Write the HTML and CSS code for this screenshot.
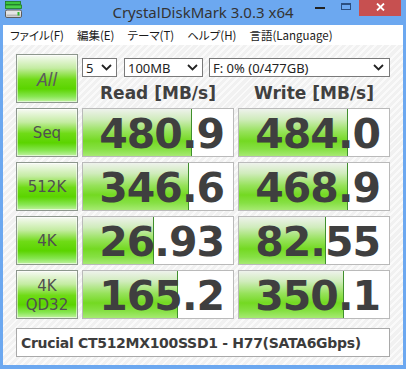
FILE: index.html
```html
<!DOCTYPE html>
<html lang="ja">
<head>
  <meta charset="UTF-8">
  <title>CrystalDiskMark 3.0.3 x64</title>
  <link rel="stylesheet" href="styles.css">
</head>
<body>
  <div class="window">
    <!-- Title bar -->
    <div class="titlebar">
      <svg class="app-icon" width="18" height="18" viewBox="0 0 18 18">
        <rect x="0.5" y="0.5" width="15" height="3" fill="#3cc43c" stroke="#1f7a1f" stroke-width="0.8"/>
        <rect x="0.5" y="4" width="16" height="3.5" fill="#4ad04a" stroke="#1f7a1f" stroke-width="0.8"/>
        <rect x="0.5" y="9" width="16" height="7.5" rx="1.5" fill="#e4e4e4" stroke="#5c5c5c"/>
        <rect x="1.5" y="13.5" width="14" height="2" fill="#b8b8b8"/>
        <rect x="12.5" y="11" width="2" height="3.5" fill="#2fb52f"/>
      </svg>
      <div class="title">CrystalDiskMark 3.0.3 x64</div>
      <div class="controls">
        <div class="ctl ctl-min"><span class="dash"></span></div>
        <div class="ctl ctl-max"><span class="box"></span></div>
        <div class="ctl ctl-close">
          <svg width="9" height="8" viewBox="0 0 9 8">
            <path d="M1 0.5 L8 7.5 M8 0.5 L1 7.5" stroke="#fff" stroke-width="1.8"/>
          </svg>
        </div>
      </div>
    </div>

    <!-- Menu -->
    <div class="menubar">
      <span class="menu-item">ファイル(F)</span>
      <span class="menu-item">編集(E)</span>
      <span class="menu-item">テーマ(T)</span>
      <span class="menu-item">ヘルプ(H)</span>
      <span class="menu-item">言語(Language)</span>
    </div>

    <div class="client">
      <div class="grid">
        <div class="label all">All</div>
        <div class="selects">
          <div class="select sel-count"><span>5</span><svg width="11" height="7" viewBox="0 0 11 7"><path d="M1 1 L5.5 5.5 L10 1" fill="none" stroke="#222" stroke-width="1.8"/></svg></div>
          <div class="select sel-size"><span>100MB</span><svg width="11" height="7" viewBox="0 0 11 7"><path d="M1 1 L5.5 5.5 L10 1" fill="none" stroke="#222" stroke-width="1.8"/></svg></div>
          <div class="select sel-drive"><span>F: 0% (0/477GB)</span><svg width="11" height="7" viewBox="0 0 11 7"><path d="M1 1 L5.5 5.5 L10 1" fill="none" stroke="#222" stroke-width="1.8"/></svg></div>
        </div>
        <div class="head">Read [MB/s]</div>
        <div class="head">Write [MB/s]</div>

        <div class="label">Seq</div>
        <div class="value"><div class="bar" style="width: 72.7%"></div><span>480.9</span></div>
        <div class="value"><div class="bar" style="width: 72.7%"></div><span>484.0</span></div>

        <div class="label">512K</div>
        <div class="value"><div class="bar" style="width: 70.7%"></div><span>346.6</span></div>
        <div class="value"><div class="bar" style="width: 72.5%"></div><span>468.9</span></div>

        <div class="label">4K</div>
        <div class="value"><div class="bar" style="width: 47.3%"></div><span>26.93</span></div>
        <div class="value"><div class="bar" style="width: 58%"></div><span>82.55</span></div>

        <div class="label two-line">4K<br>QD32</div>
        <div class="value"><div class="bar" style="width: 63.3%"></div><span>165.2</span></div>
        <div class="value"><div class="bar" style="width: 70%"></div><span>350.1</span></div>
      </div>

      <div class="info">Crucial CT512MX100SSD1 - H77(SATA6Gbps)</div>
    </div>
  </div>
</body>
</html>
```

FILE: styles.css
```css
* {
  margin: 0;
  padding: 0;
  box-sizing: border-box;
}

body {
  width: 406px;
  height: 369px;
  overflow: hidden;
  font-family: "DejaVu Sans", sans-serif;
  background: #6ca8f0;
}

.window {
  width: 406px;
  height: 369px;
  background: #6ca8f0;
  padding: 0 3px 4px;
  display: flex;
  flex-direction: column;
}

/* Title bar */
.titlebar {
  height: 25px;
  display: grid;
  grid-template-columns: 1fr auto 1fr;
  flex-shrink: 0;
}

.app-icon {
  margin: 1px 0 0 2px;
}

.title {
  font-family: "Noto Sans", sans-serif;
  font-size: 15px;
  line-height: 24px;
  color: #333;
}

.controls {
  justify-self: end;
  display: flex;
  align-items: flex-start;
  margin-right: 2px;
}

.ctl {
  height: 16px;
  display: flex;
  justify-content: center;
}

.ctl-min {
  width: 27px;
  align-items: center;
}

.dash {
  width: 10px;
  height: 2px;
  background: #222;
}

.ctl-max {
  width: 26px;
  padding-top: 3px;
}

.box {
  width: 10px;
  height: 7px;
  border: 1px solid #2b4f80;
  border-top-width: 2px;
}

.ctl-close {
  width: 42px;
  background: #c75050;
  padding-top: 3px;
}

/* Menu bar */
.menubar {
  height: 20px;
  background: #fff;
  display: flex;
  align-items: center;
  padding-left: 7px;
  gap: 13px;
  font-family: "Noto Sans CJK JP", sans-serif;
  font-size: 11.5px;
  font-feature-settings: "palt";
  color: #1a1a1a;
  flex-shrink: 0;
}

/* Client area */
.client {
  flex: 1;
  background: repeating-linear-gradient(135deg, #f1f1f1 0, #f1f1f1 3px, #fafafa 3px, #fafafa 5px);
  padding: 9px 0 0 13px;
}

.grid {
  display: grid;
  grid-template-columns: 62px 152px 152px;
  grid-template-rows: 24px 20px 49px 49px 49px 49px;
  column-gap: 4px;
  row-gap: 5px;
}

.label {
  border: 1px solid #8d978d;
  box-shadow: inset 0 0 0 1px rgba(255, 255, 255, 0.55);
  background: linear-gradient(to bottom, #f7faf4 0%, #c4eca2 28%, #6fdb16 52%, #5bd400 72%, #86e650 88%, #c2f2a4 100%);
  display: flex;
  align-items: center;
  justify-content: center;
  text-align: center;
  font-size: 15px;
  color: #505050;
}

.label.all {
  grid-row: 1 / span 2;
  font-family: "Open Sans", sans-serif;
  font-style: italic;
  font-size: 19px;
  color: #5c5c5c;
}

.label.two-line {
  line-height: 19px;
  padding-top: 2px;
}

.selects {
  grid-column: 2 / span 2;
  display: flex;
  gap: 7px;
  margin-top: 4px;
  height: 19px;
}

.select {
  height: 19px;
  border: 1px solid #7a7a7a;
  background: #fff;
  display: flex;
  align-items: center;
  justify-content: space-between;
  padding: 0 4px 0 3px;
  font-family: "Noto Sans", sans-serif;
  font-size: 13px;
  color: #222;
}

.sel-count {
  width: 35px;
}

.sel-size {
  width: 79px;
}

.sel-drive {
  flex: 1;
  margin-left: -1px;
  padding-right: 5px;
}

.head {
  text-align: center;
  font-weight: bold;
  font-size: 17px;
  line-height: 20px;
  color: #404040;
}

.value {
  position: relative;
  border: 1px solid #bababa;
  background: #fff;
  text-align: right;
  padding: 3px 9px 0 0;
  font-weight: bold;
  font-size: 41px;
  letter-spacing: -1px;
  line-height: 44px;
  color: #3f3f3f;
}

.value span {
  position: relative;
}

.bar {
  position: absolute;
  top: 0;
  left: 0;
  bottom: 0;
  border-right: 1px solid #3f8f2c;
  background: linear-gradient(to bottom, #eef2ec 0%, #d0ecbc 22%, #96e25a 48%, #74d922 68%, #86e044 85%, #a6ea72 100%);
}

.info {
  margin-top: 9px;
  width: 374px;
  height: 29px;
  border: 1px solid #a9a9a9;
  background: #fff;
  padding-left: 4px;
  display: flex;
  align-items: center;
  font-weight: bold;
  font-size: 14px;
  letter-spacing: -0.3px;
  color: #3c3c3c;
}
```
